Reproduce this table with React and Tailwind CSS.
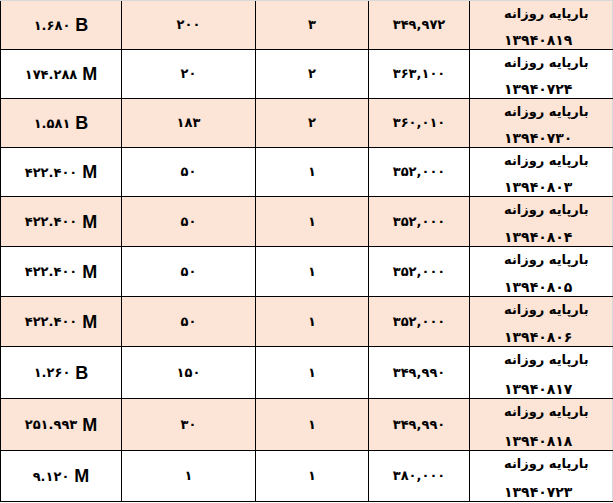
import React from "react";

const rows = [
  { amount: "۱.۶۸۰", unit: "B", count: "۲۰۰", n: "۳", price: "۳۴۹,۹۷۲", date: "۱۳۹۴۰۸۱۹", h: "h-[49px]" },
  { amount: "۱۷۴.۲۸۸", unit: "M", count: "۲۰", n: "۲", price: "۳۶۳,۱۰۰", date: "۱۳۹۴۰۷۲۴", h: "h-[49px]" },
  { amount: "۱.۵۸۱", unit: "B", count: "۱۸۳", n: "۲", price: "۳۶۰,۰۱۰", date: "۱۳۹۴۰۷۳۰", h: "h-[49px]" },
  { amount: "۴۲۲.۴۰۰", unit: "M", count: "۵۰", n: "۱", price: "۳۵۲,۰۰۰", date: "۱۳۹۴۰۸۰۳", h: "h-[49px]" },
  { amount: "۴۲۲.۴۰۰", unit: "M", count: "۵۰", n: "۱", price: "۳۵۲,۰۰۰", date: "۱۳۹۴۰۸۰۴", h: "h-[50px]" },
  { amount: "۴۲۲.۴۰۰", unit: "M", count: "۵۰", n: "۱", price: "۳۵۲,۰۰۰", date: "۱۳۹۴۰۸۰۵", h: "h-[50px]" },
  { amount: "۴۲۲.۴۰۰", unit: "M", count: "۵۰", n: "۱", price: "۳۵۲,۰۰۰", date: "۱۳۹۴۰۸۰۶", h: "h-[50px]" },
  { amount: "۱.۲۶۰", unit: "B", count: "۱۵۰", n: "۱", price: "۳۴۹,۹۹۰", date: "۱۳۹۴۰۸۱۷", h: "h-[52px]" },
  { amount: "۲۵۱.۹۹۳", unit: "M", count: "۳۰", n: "۱", price: "۳۴۹,۹۹۰", date: "۱۳۹۴۰۸۱۸", h: "h-[52px]" },
  { amount: "۹.۱۲۰", unit: "M", count: "۱", n: "۱", price: "۳۸۰,۰۰۰", date: "۱۳۹۴۰۷۲۳", h: "h-[51px]" },
];

const App = () => {
  return (
    <div className="w-[613px] h-[503px] bg-white text-black font-['DejaVu_Sans',sans-serif] font-bold">
      <div className="border-t border-[#d9d9d9]">
        {rows.map((r, i) => (
          <div
            key={i}
            className={`grid grid-cols-[122px_134px_113px_101px_143px] border-b border-black ${r.h} ${
              i % 2 === 0 ? "bg-[#fce4d6]" : "bg-white"
            }`}
          >
            <div className="flex items-center justify-center border-x border-black pt-[1px]">
              <span className="text-[13px]" dir="ltr">{r.amount}</span>
              <span className="ml-[5px] text-[18px] font-['Liberation_Sans',sans-serif]">{r.unit}</span>
            </div>
            <div className="flex items-center justify-center border-r border-black text-[13px]">
              {r.count}
            </div>
            <div className="flex items-center justify-center border-r border-black text-[13px]">
              {r.n}
            </div>
            <div className="flex items-center justify-center border-r border-black text-[13px]" dir="ltr">
              {r.price}
            </div>
            <div className="flex flex-col items-start justify-between border-r border-[#d9d9d9] pl-[34px] pt-[4px]">
              <span dir="rtl" className="text-[13px] leading-[18px]">بارپایه روزانه</span>
              <span className="text-[14px] leading-[18px]">{r.date}</span>
            </div>
          </div>
        ))}
      </div>
    </div>
  );
};

export default App;
